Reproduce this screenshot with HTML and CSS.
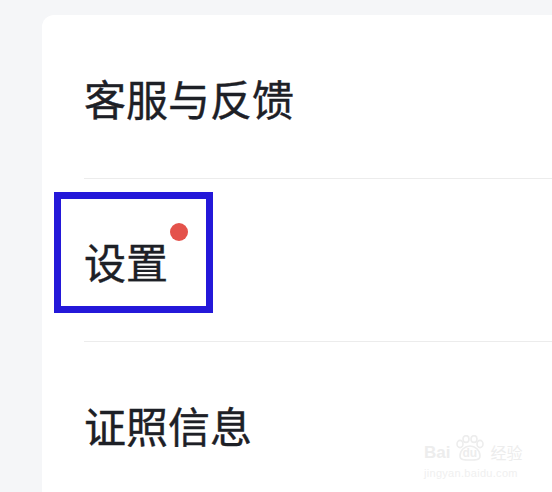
FILE: index.html
```html
<!DOCTYPE html>
<html lang="zh">
<head>
<meta charset="utf-8">
<link rel="stylesheet" href="styles.css">
</head>
<body>
<div class="card">
  <div class="row"><span class="label">客服与反馈</span></div>
  <div class="row">
    <span class="label badge-wrap">设置<span class="dot"></span></span>
    <div class="highlight"></div>
  </div>
  <div class="row last"><span class="label">证照信息</span></div>
</div>
<div class="watermark">
  <div class="wm-top">
    <span class="wm-bai">Bai</span>
    <span class="wm-paw">
      <svg width="36" height="26" viewBox="0 0 36 26">
        <g fill="none" stroke="#ededed" stroke-width="1.6">
          <ellipse cx="8" cy="9" rx="3" ry="3.6"/>
          <ellipse cx="14" cy="4" rx="3" ry="3.4"/>
          <ellipse cx="22" cy="4" rx="3" ry="3.4"/>
          <ellipse cx="28" cy="9" rx="3" ry="3.6"/>
          <path d="M8 21 C8 15 13 11 18 11 C23 11 28 15 28 21 C28 25 24 25 18 25 C12 25 8 25 8 21 Z"/>
        </g>
      </svg>
      <span class="wm-du">du</span>
    </span>
    <span class="wm-jy">经验</span>
  </div>
  <div class="wm-url">jingyan.baidu.com</div>
</div>
</body>
</html>
```
FILE: styles.css
```css
html, body {
  margin: 0;
  padding: 0;
  background: #f5f6f8;
  height: 100%;
  overflow: hidden;
}
body {
  padding: 15px 0 0 42px;
  box-sizing: border-box;
  font-family: "Noto Sans CJK SC", "Noto Sans", sans-serif;
  position: relative;
}
.card {
  background: #ffffff;
  border-top-left-radius: 12px;
  padding-left: 42px;
  padding-top: 1px;
  height: 100%;
  box-sizing: border-box;
}
.row {
  height: 163px;
  border-bottom: 1px solid #ececec;
  display: flex;
  align-items: center;
  position: relative;
  padding-top: 2px;
  box-sizing: border-box;
}
.row.last {
  border-bottom: none;
}
.label {
  font-size: 42px;
  line-height: 42px;
  font-weight: 400;
  color: #1d2026;
  -webkit-text-stroke: 0.4px #1d2026;
}
.badge-wrap {
  position: relative;
}
.dot {
  position: absolute;
  width: 18px;
  height: 18px;
  border-radius: 50%;
  background: #e4524b;
  right: -20px;
  top: -17px;
}
.highlight {
  position: absolute;
  left: -30px;
  top: 13px;
  width: 159px;
  height: 121px;
  border: 7px solid #2418d9;
  box-sizing: border-box;
}
.watermark {
  position: absolute;
  left: 424px;
  top: 435px;
  color: #ededed;
  font-family: "Liberation Sans", sans-serif;
}
.wm-top {
  display: flex;
  align-items: flex-end;
  gap: 2px;
}
.wm-bai {
  font-size: 17px;
  font-weight: 700;
  line-height: 17px;
}
.wm-paw {
  position: relative;
  display: block;
  width: 36px;
  height: 26px;
}
.wm-paw svg {
  display: block;
}
.wm-du {
  position: absolute;
  left: 10px;
  top: 11px;
  font-size: 12px;
  font-weight: 700;
}
.wm-jy {
  font-family: "Noto Sans CJK SC", sans-serif;
  font-size: 16px;
  line-height: 18px;
}
.wm-url {
  font-size: 11px;
  margin-top: 6px;
  color: #f0f0f0;
  letter-spacing: 0.3px;
}
```
